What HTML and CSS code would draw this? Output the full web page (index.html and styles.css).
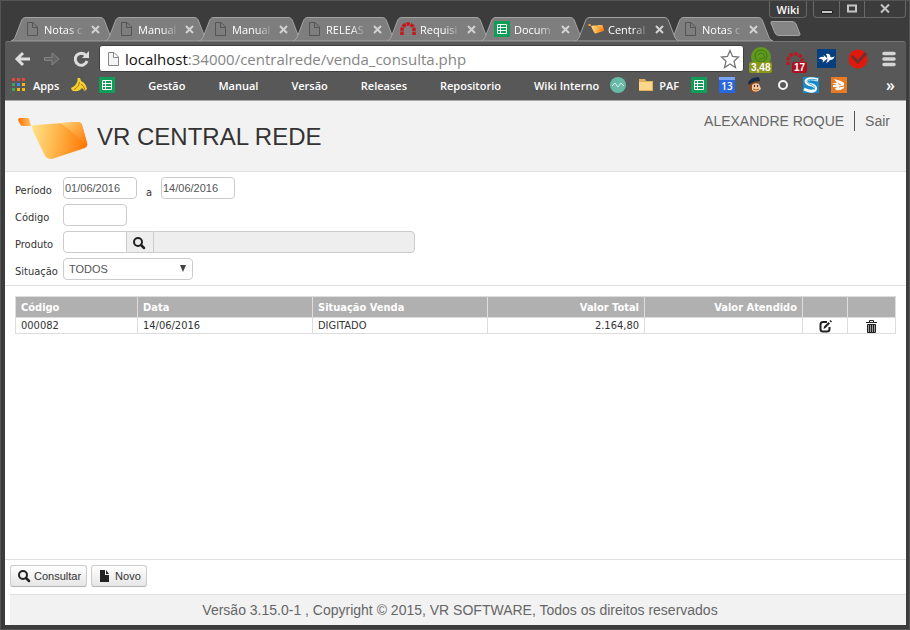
FILE: index.html
```
<!DOCTYPE html>
<html lang="pt-BR">
<head>
<meta charset="utf-8">
<title>VR Central Rede</title>
<link rel="stylesheet" href="styles.css">
</head>

<body>

<!-- shared icons -->
<svg class="defs" width="0" height="0">
  <defs>
    <linearGradient id="cart" x1="0" x2="1" y1="0" y2="0.1">
      <stop offset="0" stop-color="#ffe48a"/>
      <stop offset="0.5" stop-color="#ffb347"/>
      <stop offset="1" stop-color="#ff7a08"/>
    </linearGradient>
    <linearGradient id="fold" x1="0" x2="1" y1="0" y2="1">
      <stop offset="0" stop-color="#ffd677"/>
      <stop offset="1" stop-color="#ff6f00"/>
    </linearGradient>
    <linearGradient id="handle" x1="0" x2="1" y1="0" y2="0">
      <stop offset="0" stop-color="#ff6f00"/>
      <stop offset="1" stop-color="#ffc266"/>
    </linearGradient>
    <symbol id="tab" viewBox="0 0 104 24">
      <path d="M0 24C3 23 4 21 5 18L10 5C11 2 12 .5 15 .5H89C92 .5 93 2 94 5L99 18C100 21 101 23 104 24Z"/>
    </symbol>
    <symbol id="page" viewBox="0 0 16 16">
      <path d="M3.500 1.500H9L13.500 6V14.500H3.500ZM8.500 1.500V6.500H13.500"/>
    </symbol>
    <symbol id="close" viewBox="0 0 9 9">
      <path d="M1 1L8 8M8 1L1 8"/>
    </symbol>
    <symbol id="arch" viewBox="0 0 16 16">
      <path d="M2 14V9A6 6 0 0 1 14 9V14" fill="none" stroke="#c8171c" stroke-width="3.500" stroke-dasharray="3.400 .8"/>
    </symbol>
    <symbol id="sheet" viewBox="0 0 16 16">
      <path fill="#0f9d58" d="M0 0H16V16H0Z"/>
      <path fill="none" stroke="#fff" stroke-width="1" d="M3.500 3.500H12.500V12.500H3.500ZM3.500 6.500H12.500M3.500 9.500H12.500M6.500 3.500V12.500"/>
    </symbol>
    <symbol id="logo" viewBox="0 0 70 43">
      <path fill="url(#handle)" d="M0 2Q0 0 2 0H9Q11 0 11.500 2L13 8H5Q3 8 2 6Z"/>
      <path fill="url(#cart)" d="M14 9Q14 7 17 7L60 4Q63 4 64 7L69 25Q70 28 67 30L37 40Q29 43 26 36L15 13Z"/>
      <path fill="url(#fold)" d="M42 5L60 4Q63 4 64 7L69 25Q70 28 67 29Q60 17 42 5Z"/>
    </symbol>
    <symbol id="search" viewBox="0 0 14 14">
      <circle cx="6" cy="6" r="4" fill="none" stroke="#222" stroke-width="2"/>
      <path d="M9 9L12 12" stroke="#222" stroke-width="2.500" stroke-linecap="round"/>
    </symbol>
  </defs>
</svg>

<div class="titlebar">
  <div class="tabs">
    <div class="tab"><svg class="shape"><use href="#tab"/></svg><svg class="fav page"><use href="#page"/></svg><span>Notas c</span><svg class="x"><use href="#close"/></svg></div>
    <div class="tab"><svg class="shape"><use href="#tab"/></svg><svg class="fav page"><use href="#page"/></svg><span>Manual</span><svg class="x"><use href="#close"/></svg></div>
    <div class="tab"><svg class="shape"><use href="#tab"/></svg><svg class="fav page"><use href="#page"/></svg><span>Manual</span><svg class="x"><use href="#close"/></svg></div>
    <div class="tab"><svg class="shape"><use href="#tab"/></svg><svg class="fav page"><use href="#page"/></svg><span>RELEAS</span><svg class="x"><use href="#close"/></svg></div>
    <div class="tab"><svg class="shape"><use href="#tab"/></svg><svg class="fav"><use href="#arch"/></svg><span>Requisi</span><svg class="x"><use href="#close"/></svg></div>
    <div class="tab"><svg class="shape"><use href="#tab"/></svg><svg class="fav"><use href="#sheet"/></svg><span>Docum</span><svg class="x"><use href="#close"/></svg></div>
    <div class="tab active"><svg class="shape"><use href="#tab"/></svg><svg class="fav"><use href="#logo"/></svg><span>Central</span><svg class="x"><use href="#close"/></svg></div>
    <div class="tab"><svg class="shape"><use href="#tab"/></svg><svg class="fav page"><use href="#page"/></svg><span>Notas c</span><svg class="x"><use href="#close"/></svg></div>
    <button class="newtab" aria-label="Nova guia"><svg width="32" height="15"><path d="M2 .5H22Q25 .5 26 3L30 13Q30.500 14.500 28 14.500H9Q6 14.500 5 12L1 2Q.5 .5 2 .5Z" fill="#858585" stroke="#a5a5a5"/></svg></button>
  </div>
  <div class="window">
    <button class="profile">Wiki</button>
    <div class="winbtns">
      <button aria-label="Minimizar"><svg width="12" height="12"><path d="M.5 7.500H11.500V10.500H.5Z" fill="#c4c4c4" stroke="#222"/></svg></button>
      <button aria-label="Maximizar"><svg width="12" height="12"><path d="M2 2.500H10V8.500H2Z" fill="none" stroke="#c4c4c4" stroke-width="2"/></svg></button>
      <button class="wide" aria-label="Fechar"><svg width="12" height="12"><path d="M2 1.500L10 9.500M10 1.500L2 9.500" stroke="#c4c4c4" stroke-width="2"/></svg></button>
    </div>
  </div>
</div>

<div class="toolbar">
  <div class="nav">
    <button aria-label="Voltar"><svg width="18" height="18"><path d="M2 9H16M9 3L3 9L9 15" fill="none" stroke="#ddd" stroke-width="3"/></svg></button>
    <button aria-label="Avançar"><svg width="18" height="18"><path d="M1.500 7.500H9V3L16 9L9 15V10.500H1.500Z" fill="#666" stroke="#858585"/></svg></button>
    <button aria-label="Recarregar"><svg width="18" height="18"><path d="M14 5.500A6 6 0 1 0 15 11" fill="none" stroke="#ddd" stroke-width="3"/><path d="M17 1V8H10Z" fill="#ddd"/></svg></button>
    <div class="omnibox">
      <svg class="fav page"><use href="#page"/></svg>
      <div class="url" role="textbox" aria-label="Endereço"><b>localhost</b>:34000/centralrede/venda_consulta.php</div>
      <svg width="20" height="20"><path d="M10 1.500L12.500 7.500L18.500 8L14 12.200L15.500 18.500L10 15L4.500 18.500L6 12.200L1.500 8L7.500 7.500Z" fill="#fff" stroke="#777" stroke-width="1.300"/></svg>
    </div>
    <div class="exts">
      <a href="#" class="ext" aria-label="Cotação"><svg width="24" height="24"><circle cx="12" cy="10" r="10" fill="#5f9a1f"/><circle cx="12" cy="9" r="6" fill="none" stroke="#427512"/><path d="M9 8Q12 4 15 8T10 12" fill="none" stroke="#427512"/></svg><em class="badge">3,48</em></a>
      <a href="#" class="ext" aria-label="Redmine"><svg width="20" height="20"><path d="M3 16V11A7 6 0 0 1 17 11V16" fill="none" stroke="#b51c20" stroke-width="3.500" stroke-dasharray="3.500 1.200"/></svg><em class="badge red">17</em></a>
      <a href="#" class="ext" aria-label="Remoto"><svg width="19" height="19"><path d="M0 0H19V19H0Z" fill="#063f80"/><path d="M1.500 10Q3 7 7 8L6.500 6L10.500 9.500L5.500 13.500L6 11Q3 9 1.500 10ZM9 5Q13 4 13.500 8Q16 9 17.500 7Q17 11 13 11Q12 13 9 14Q12 10 9 5Z" fill="#fff"/></svg></a>
      <a href="#" class="ext" aria-label="Tarefas"><svg width="20" height="20"><circle cx="10" cy="10" r="9.500" fill="#e3180b"/><path d="M4 7L10 13L18 4" fill="none" stroke="#713030" stroke-width="3"/></svg></a>
      <button class="menu" aria-label="Menu"><svg width="14" height="16"><path d="M2 2.500H12M2 8H12M2 13.500H12" stroke="#d5d5d5" stroke-width="3.500" stroke-linecap="round"/></svg></button>
    </div>
  </div>

  <div class="bookmarks">
    <a href="#" class="apps"><svg width="13" height="14"><path d="M0 0H3V3H0ZM5 0H8V3H5ZM10 0H13V3H10Z" fill="#e8453c"/><path d="M0 5H3V8H0ZM0 10H3V13H0Z" fill="#3aa757"/><path d="M5 5H8V8H5Z" fill="#4285f4"/><path d="M10 5H13V8H10ZM5 10H8V13H5ZM10 10H13V13H10Z" fill="#f9bb0b"/></svg>Apps</a>
    <a href="#" class="mark" aria-label="Banana"><svg width="16" height="16"><path d="M6.500 1H9L10 4Q15 6 16 12L14 14L11 11Q7 16 1 13.500L0 11Q5 9 6.500 4Z" fill="#f7cf2c"/><path d="M8.500 5Q8 10 3 12.500M10 7Q13 9 14 13" fill="none" stroke="#a47d08"/></svg></a>
    <a href="#" class="mark" aria-label="Planilha"><svg width="16" height="16"><use href="#sheet"/></svg></a>
    <nav class="links">
      <a href="#">Gestão</a>
      <a href="#">Manual</a>
      <a href="#">Versão</a>
      <a href="#">Releases</a>
      <a href="#">Repositorio</a>
      <a href="#">Wiki Interno</a>
    </nav>
    <div class="marks">
      <a href="#" aria-label="Monitor"><svg width="16" height="16"><circle cx="8" cy="8" r="8" fill="#68b9a5"/><path d="M2 9L5 6L8 10L11 6L14 9" fill="none" stroke="#d9f1eb"/></svg></a>
      <a href="#" class="folder"><svg width="16" height="16"><path d="M1 2H7L8 4H15V14H1Z" fill="#e3b25f"/><path d="M1 5H14V13H1Z" fill="#fbd78b"/></svg>PAF</a>
      <a href="#" aria-label="Planilha"><svg width="16" height="16"><use href="#sheet"/></svg></a>
      <a href="#" class="cal">13</a>
      <a href="#" aria-label="Mailchimp"><svg width="16" height="16"><path d="M2 6Q6 2 12 4L12 14Q6 18 2 12Z" fill="#87491f"/><path d="M5 8Q8 5 12 7L14 12Q9 17 5 13Z" fill="#efc59a"/><path d="M1 6Q3 0 12 0L13 4Q6 4 2 8Z" fill="#162b46"/><path d="M7 8H8V10H7ZM10 8H11V10H10Z" fill="#422"/><path d="M6 12Q9 14 12 12" fill="none" stroke="#a1652e"/></svg></a>
      <a href="#" aria-label="Círculo"><svg width="16" height="16"><circle cx="8" cy="8" r="4" fill="none" stroke="#f4f4f4" stroke-width="2"/></svg></a>
      <a href="#" aria-label="S"><svg width="16" height="16"><path d="M0 0H16V16H0Z" fill="#168bc8"/><path d="M15 3Q5 0 3 4Q3 7 9 8Q14 10 12 13Q8 16 1 12" fill="none" stroke="#fff" stroke-width="3"/><path d="M14 3Q5 1 4 4.500Q5 7 10 8.500Q13 10 11 13" fill="none" stroke="#168bc8" stroke-width=".8"/></svg></a>
      <a href="#" aria-label="Mão"><svg width="16" height="16"><path d="M0 0H16V16H0Z" fill="#e77b24"/><path d="M3 2L10 4L13 6V11Q9 14 5 13L4 11L7 10L2 10L2 8L6 8L1 6L6 6Z" fill="#fff"/><path d="M7 6.500L10 8M8 10L13 9" stroke="#e77b24"/></svg></a>
      <button class="more" aria-label="Mais favoritos">»</button>
    </div>
  </div>
</div>

<div class="content">
  <header class="header">
    <svg class="logo"><use href="#logo"/></svg>
    <h1>VR CENTRAL REDE</h1>
    <div class="user"><span>ALEXANDRE ROQUE</span><a href="#">Sair</a></div>
  </header>

  <form class="filter">
    <div class="row">
      <label for="inicio">Período</label>
      <input class="date" id="inicio" type="text" value="01/06/2016">
      <label class="to" for="fim">a</label>
      <input class="date" id="fim" type="text" value="14/06/2016">
    </div>
    <div class="row">
      <label for="codigo">Código</label>
      <input class="code" id="codigo" type="text">
    </div>
    <div class="row">
      <label for="produto">Produto</label>
      <div class="group">
        <input class="code" id="produto" type="text">
        <button type="button" aria-label="Buscar produto"><svg width="14" height="14"><use href="#search"/></svg></button>
        <input class="desc" type="text" aria-label="Descrição do produto" readonly>
      </div>
    </div>
    <div class="row">
      <label for="situacao">Situação</label>
      <div class="select">
        <select id="situacao"><option>TODOS</option></select>
      </div>
    </div>
  </form>

  <main class="list">
    <table>
      <colgroup><col class="c-codigo"><col class="c-data"><col class="c-data"><col class="c-total"><col class="c-atendido"><col class="c-editar"><col class="c-excluir"></colgroup>
      <thead>
        <tr><th>Código</th><th>Data</th><th>Situação Venda</th><th class="num">Valor Total</th><th class="num">Valor Atendido</th><th></th><th></th></tr>
      </thead>
      <tbody>
        <tr>
          <td>000082</td><td>14/06/2016</td><td>DIGITADO</td><td class="num">2.164,80</td><td class="num"></td>
          <td class="icon"><a href="#" aria-label="Editar"><svg width="13" height="13"><path d="M8 2H4Q1.500 2 1.500 4.500V9Q1.500 11.500 4 11.500H8Q10.500 11.500 10.500 9V7" fill="none" stroke="#222" stroke-width="2"/><path d="M4.500 9L5 6.500L9.500 2L11 3.500L6.500 8ZM10.500 1L11.500 0L13 1.500L12 2.500Z" fill="#222"/></svg></a></td>
          <td class="icon"><a href="#" aria-label="Excluir"><svg width="12" height="13"><path d="M0 2.500H11M3.500 2V.5H7.500V2" fill="none" stroke="#222"/><path d="M1.500 4.500H9.500V12.500H1.500Z" fill="#999" stroke="#222"/><path d="M3.500 5V12M5.500 5V12M7.500 5V12" stroke="#222"/></svg></a></td>
        </tr>
      </tbody>
    </table>
  </main>

  <div class="actions">
    <button><svg width="14" height="14"><use href="#search"/></svg>Consultar</button>
    <button><svg width="14" height="14"><path d="M2 1H7V6H11V13H2ZM8 1L11 5H8Z" fill="#222"/></svg>Novo</button>
  </div>

  <footer class="footer">Versão 3.15.0-1 , Copyright © 2015, VR SOFTWARE, Todos os direitos reservados</footer>
</div>

</body>
</html>
```
FILE: styles.css
```
* {
  box-sizing: border-box;
}

body {
  margin: 0;
  height: 100vh;
  display: flex;
  flex-direction: column;
  padding: 0 4px 5px 5px;
  background: #3c3c3c;
  box-shadow: inset 0 0 0 1px #555;
  overflow: hidden;
  font-family: "Liberation Sans", Arial, sans-serif;
  font-size: 11px;
  color: #333;
}

a {
  color: inherit;
  text-decoration: none;
}

button {
  margin: 0;
  padding: 0;
  border: 0;
  background: none;
  color: inherit;
  font: inherit;
}

svg {
  display: block;
  flex: none;
}

.defs {
  position: absolute;
}

/* tab strip */

.titlebar {
  position: relative;
  height: 41px;
  padding: 17px 0 0 6px;
  font-family: "Open Sans", sans-serif;
  color: #fff;
}

.tabs {
  display: flex;
}

.tab {
  position: relative;
  display: flex;
  align-items: center;
  width: 94px;
  height: 24px;
  padding-left: 13px;
  font-size: 11px;
  font-weight: 500;
}

.tab .shape {
  position: absolute;
  left: 0;
  top: 0;
  width: 104px;
  height: 24px;
  fill: #7e7e7e;
  stroke: #a3a3a3;
}

.tab.active {
  z-index: 1;
}

.tab.active .shape {
  fill: #585858;
}

.tab .fav,
.tab .x,
.tab span {
  position: relative;
}

.fav {
  width: 16px;
  height: 16px;
}

.fav.page {
  fill: none;
  stroke: #555;
}

.tab span {
  width: 41px;
  margin: 0 6px 0 4px;
  white-space: nowrap;
  -webkit-mask-image: linear-gradient(to right, #000 60%, transparent);
  mask-image: linear-gradient(to right, #000 60%, transparent);
}

.tab .x {
  width: 9px;
  height: 9px;
  stroke: #d2d2d2;
  stroke-width: 2;
}

.newtab {
  margin: 4px 0 0 7px;
  align-self: flex-start;
}

/* window buttons float over the end of the tab strip */
.window {
  position: absolute;
  top: 1px;
  right: 0;
  display: flex;
  gap: 6px;
}

.profile,
.winbtns {
  height: 17px;
  border: 1px solid #686868;
  border-top: 0;
  border-radius: 0 0 4px 4px;
}

.profile {
  width: 38px;
  font-size: 11px;
  font-weight: 600;
}

.winbtns {
  display: flex;
}

.winbtns button {
  display: flex;
  align-items: center;
  justify-content: center;
  width: 25px;
}

.winbtns button + button {
  border-left: 1px solid #686868;
}

.winbtns .wide {
  width: 41px;
}

/* toolbar */

.toolbar {
  height: 60px;
  padding: 3px 6px 0 7px;
  background: #585858;
  border-top: 1px solid #777;
  border-bottom: 1px solid #a9a9a9;
  border-radius: 3px 3px 0 0;
  font-family: "Open Sans", sans-serif;
  color: #fff;
}

.nav {
  display: flex;
  align-items: center;
}

.nav > button {
  width: 29px;
  padding-left: 2px;
}

.omnibox {
  display: flex;
  flex: 1;
  align-items: center;
  height: 27px;
  padding: 0 3px 0 5px;
  background: #fff;
  border: 1px solid #3e3e3e;
  border-radius: 3px;
}

.omnibox .page {
  fill: #f4f4f4;
  stroke: #888;
}

.url {
  flex: 1;
  padding-left: 4px;
  font-size: 15px;
  line-height: 20px;
  color: #858585;
}

.url b {
  font-weight: 400;
  color: #111;
}

.exts {
  display: flex;
  align-items: center;
  gap: 12px;
  padding: 0 4px 0 5px;
}

.ext {
  position: relative;
}

.badge {
  position: absolute;
  left: 0;
  bottom: -2px;
  padding: 0 2px;
  border-radius: 2px;
  background: #8c951c;
  font: bold 10px/11px "Liberation Sans", sans-serif;
}

.badge.red {
  left: 7px;
  bottom: -4px;
  background: #b01020;
}

.menu {
  padding-left: 2px;
}

.bookmarks {
  display: flex;
  align-items: center;
  height: 26px;
  font-size: 11px;
  font-weight: 600;
}

.apps {
  display: flex;
  align-items: center;
  gap: 8px;
}

.mark {
  margin-left: 12px;
}

.links {
  display: flex;
  gap: 33px;
  margin-left: 33px;
}

.marks {
  display: flex;
  flex: 1;
  align-items: center;
  gap: 12px;
  margin-left: 11px;
}

.folder {
  display: flex;
  align-items: center;
  gap: 5px;
}

.cal {
  width: 16px;
  border-top: 3px solid #7aa5f5;
  background: #2a66dd;
  font-size: 10px;
  line-height: 13px;
  text-align: center;
}

.more {
  margin-left: auto;
  padding-right: 5px;
  font-size: 16px;
}

/* page */

.content {
  display: flex;
  flex: 1;
  flex-direction: column;
  background: #fff;
}

.header {
  display: flex;
  height: 71px;
  padding: 0 16px 0 13px;
  background: #f2f2f2;
  border-bottom: 1px solid #e0e0e0;
}

.logo {
  width: 70px;
  height: 43px;
  margin-top: 17px;
}

h1 {
  margin: 22px 0 0 9px;
  font-size: 24px;
  line-height: 28px;
  font-weight: 400;
}

.user {
  margin: 10px 0 0 auto;
  font-size: 14px;
  line-height: 20px;
  color: #666;
}

.user a {
  display: inline-block;
  margin-left: 10px;
  padding-left: 10px;
  border-left: 1px solid #555;
}

.filter {
  display: flex;
  flex-direction: column;
  gap: 5px;
  padding: 5px 10px;
  border-bottom: 1px solid #e0e0e0;
}

.row {
  display: flex;
  height: 22px;
}

.row label {
  width: 48px;
  padding-top: 5px;
  font: 11px/18px "DejaVu Sans Condensed", Tahoma, sans-serif;
}

.row .to {
  width: 24px;
  padding-top: 7px;
  text-align: center;
}

.row input,
.row select {
  height: 22px;
  padding: 0 1px 1px;
  border: 1px solid #ccc;
  border-radius: 4px;
  background: #fff;
  font: 11px "Liberation Sans", Arial, sans-serif;
  color: #555;
}

.row .date {
  width: 74px;
}

.row .code {
  width: 64px;
}

.group {
  display: flex;
}

.group .code {
  border-radius: 4px 0 0 4px;
}

.group button {
  width: 26px;
  padding: 2px 0 0 5px;
  background: #eee;
  border: solid #ccc;
  border-width: 1px 0;
}

.group .desc {
  width: 262px;
  background: #eee;
  border-radius: 0 4px 4px 0;
}

.select {
  position: relative;
}

.select::after {
  content: "";
  position: absolute;
  right: 7px;
  top: 7px;
  border: solid transparent;
  border-width: 7px 3px 0;
  border-top-color: #444;
}

.row select {
  width: 130px;
  padding-left: 5px;
  -webkit-appearance: none;
  appearance: none;
}

.list {
  flex: 1;
  padding: 10px 10px 0;
}

table {
  width: 100%;
  table-layout: fixed;
  border-collapse: collapse;
  font: 11px/15px "DejaVu Sans Condensed", Tahoma, sans-serif;
}

.c-codigo { width: 122px; }
.c-data { width: 175px; }
.c-total { width: 157px; }
.c-atendido { width: 158px; }
.c-editar { width: 45px; }
.c-excluir { width: 48px; }

th,
td {
  padding: 0 5px;
  border: 1px solid #ddd;
  text-align: left;
}

th {
  height: 21px;
  background: #b0b0b0;
  color: #fff;
}

.num {
  text-align: right;
}

.icon svg {
  margin: 1px auto 0;
}

.actions {
  display: flex;
  gap: 4px;
  height: 35px;
  padding: 5px;
  border-top: 1px solid #e0e0e0;
}

.actions button {
  display: flex;
  align-items: center;
  gap: 3px;
  height: 22px;
  padding: 0 5px 0 6px;
  border: 1px solid #ccc;
  border-bottom-color: #b3b3b3;
  border-radius: 3px;
  background: linear-gradient(#fff, #e6e6e6);
}

.footer {
  margin-left: 5px;
  padding-left: 4px;
  border-top: 1px solid #e0e0e0;
  background: #f2f2f2;
  font-size: 14px;
  line-height: 30px;
  text-align: center;
  color: #666;
}
```
